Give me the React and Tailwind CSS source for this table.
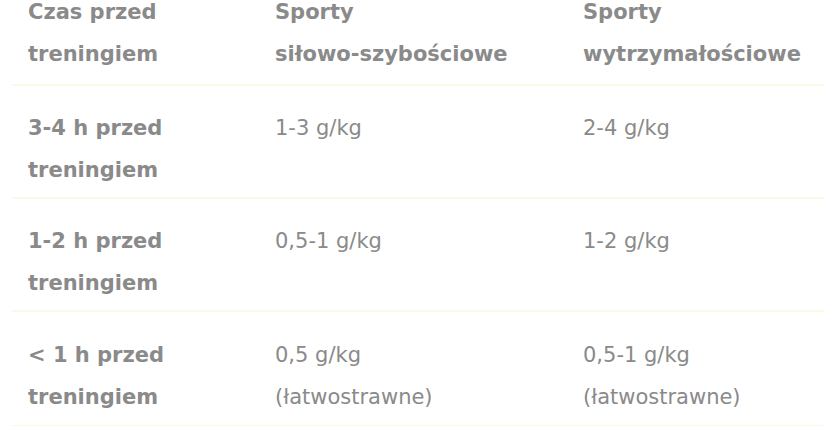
export default function App() {
  const rows = [
    ["3-4 h przed treningiem", ["1-3 g/kg"], ["2-4 g/kg"]],
    ["1-2 h przed treningiem", ["0,5-1 g/kg"], ["1-2 g/kg"]],
    ["< 1 h przed treningiem", ["0,5 g/kg", "(łatwostrawne)"], ["0,5-1 g/kg", "(łatwostrawne)"]],
  ];
  const grid = "grid grid-cols-[247px_308px_1fr] border-b-2 border-[#fbf9e6]";
  return (
    <div className="w-[838px] h-[426px] overflow-hidden bg-white text-[#8a8a8a] text-[21px] leading-[42px]" style={{ fontFamily: '"DejaVu Sans", Verdana, sans-serif' }}>
      <div className="ml-[12px] w-[812px] -mt-[9px]">
        <div className={grid + " pb-[9px]"}>
          <div className="pl-[16px] font-bold">Czas przed<br />treningiem</div>
          <div className="pl-[16px] font-bold">Sporty<br />siłowo-szybościowe</div>
          <div className="pl-[16px] font-bold">Sporty<br />wytrzymałościowe</div>
        </div>
        {rows.map((r, i) => (
          <div key={i} className={grid + (i === 2 ? " pt-[22px] pb-[7px]" : " pt-[21px] pb-[6px]")}>
            <div className="pl-[16px] font-bold w-[190px]">{r[0]}</div>
            <div className="pl-[16px]">
              {r[1].map((t, j) => (<div key={j}>{t}</div>))}
            </div>
            <div className="pl-[16px]">
              {r[2].map((t, j) => (<div key={j}>{t}</div>))}
            </div>
          </div>
        ))}
      </div>
    </div>
  );
}
